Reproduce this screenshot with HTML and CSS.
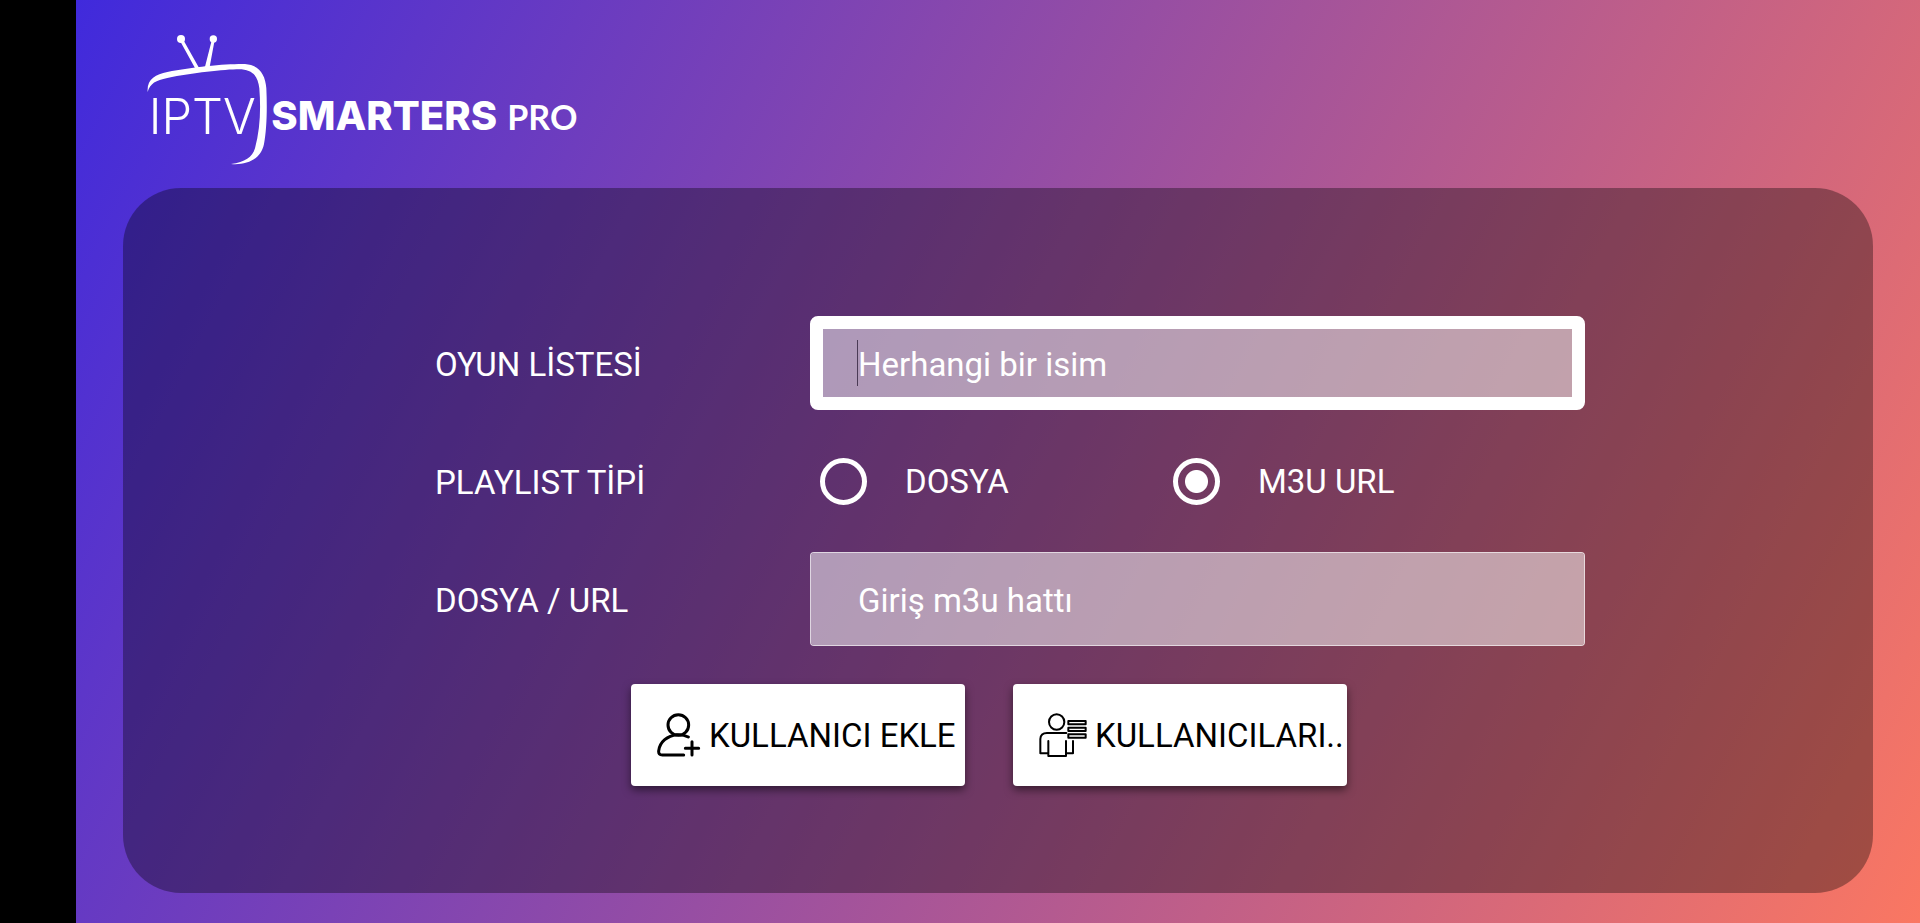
FILE: index.html
```html
<!DOCTYPE html>
<html lang="tr">
<head>
    <meta charset="UTF-8">
    <meta name="viewport" content="width=device-width, initial-scale=1.0">
    <title>IPTV Smarters Pro</title>
    <link rel="stylesheet" href="styles.css">
</head>
<body>
    <div class="screen">
        <header class="header">
            <svg class="logo" viewBox="0 0 1380 480" role="img" aria-label="IPTV Smarters Pro">
                <!-- antenna -->
                <circle cx="153" cy="57" r="12"/>
                <circle cx="250" cy="57" r="11"/>
                <path d="M149 61 L197 148 L238 146 L254 60 L246 58 L225 140 Q214 146 206 142 L158 56 Z"/>
                <!-- tv frame -->
                <path d="M53 216 C50 178 76 164 112 156 C190 140 290 131 345 132 C386 135 406 162 409 205 C412 270 410 330 402 372 C393 418 350 436 303 432 C345 427 367 412 375 385 C390 330 393 270 388 205 C384 172 372 152 335 148 C290 147 190 158 112 174 C78 181 60 190 53 216 Z"/>
                <text class="logo-iptv" x="56" y="342">IPTV</text>
                <text class="logo-smarters" x="424" y="329">SMARTERS</text>
                <text class="logo-pro" x="1132" y="330">PRO</text>
            </svg>
        </header>

        <main class="panel">
            <form class="playlist-form">
                <label class="form-label" for="playlistName">OYUN LİSTESİ</label>
                <div class="field active">
                    <input type="text" id="playlistName" placeholder="Herhangi bir isim">
                </div>

                <span class="form-label" id="typeLabel">PLAYLIST TİPİ</span>
                <div class="radio-group" role="radiogroup" aria-labelledby="typeLabel">
                    <label class="radio"><input type="radio" name="type" value="file">DOSYA</label>
                    <label class="radio"><input type="radio" name="type" value="url" checked>M3U URL</label>
                </div>

                <label class="form-label" for="playlistUrl">DOSYA / URL</label>
                <div class="field">
                    <input type="text" id="playlistUrl" placeholder="Giriş m3u hattı">
                </div>
            </form>

            <div class="actions">
                <button type="button" class="button">
                    <svg class="icon-add" viewBox="0 0 132 132" aria-hidden="true">
                        <circle cx="64" cy="36" r="31"/>
                        <path d="M94 72 Q80 64 60 65 C32 68 8 86 5 114 Q4 126 16 126 H80"/>
                        <path d="M105 86 V126 M85 106 H125"/>
                    </svg>
                    KULLANICI EKLE
                </button>
                <button type="button" class="button">
                    <svg class="icon-list" viewBox="0 0 144 132" aria-hidden="true">
                        <circle cx="53" cy="27" r="23"/>
                        <path d="M82 60 H24 Q5 60 4 78 V121 H26 M28 84 V129 H81 V84 M84 121 H102 V84"/>
                        <path d="M88 24 H140 V34 H88 Z M88 44 H140 V54 H88 Z M88 64 H140 V74 H88 Z"/>
                    </svg>
                    KULLANICILARI..
                </button>
            </div>
        </main>
    </div>
</body>
</html>
```
FILE: styles.css
```css
* {
    box-sizing: border-box;
}
body {
    margin: 0;
    padding-left: 76px;
    background-color: #000;
    color: white;
    font-family: Roboto, sans-serif;
    font-size: 33px;
}
.screen {
    display: flex;
    flex-direction: column;
    min-height: 100vh;
    padding: 20px 47px 30px;
    background: linear-gradient(117deg, #402adc, #fa7762);
}
.header {
    height: 168px;
    padding-left: 7px;
}
.logo {
    display: block;
    width: 460px;
    height: 160px;
    fill: white;
    font-family: Lato, sans-serif;
}
.logo-iptv {
    font-family: Inter, sans-serif;
    font-size: 146px;
    font-weight: 300;
}
.logo-smarters {
    font-family: Inter, sans-serif;
    font-size: 120px;
    font-weight: 800;
}
.logo-pro {
    font-size: 102px;
    font-weight: 700;
}
.panel {
    flex: 1;
    padding: 128px 0 106px;
    border-radius: 58px;
    background-color: rgba(0, 0, 0, 0.34);
}
.playlist-form {
    display: grid;
    grid-template-columns: 375px 1fr;
    grid-auto-rows: 94px;
    row-gap: 24px;
    align-items: center;
    padding: 0 288px 0 312px;
}
.form-label {
    padding-top: 2px;
}
.field {
    position: relative;
    height: 94px;
}
.field input {
    width: 100%;
    height: 100%;
    padding: 2px 47px 0;
    border: 1px solid rgba(255, 255, 255, 0.8);
    border-radius: 4px;
    background-color: rgba(255, 255, 255, 0.51);
    background-clip: padding-box;
    color: white;
    font: inherit;
    outline: none;
}
.field input::placeholder {
    color: white;
    opacity: 1;
}
.field.active input {
    padding: 2px 35px 0;
    border: 13px solid white;
    border-radius: 8px;
}
/* text cursor */
.field.active::before {
    content: "";
    position: absolute;
    top: 24px;
    left: 47px;
    width: 1px;
    height: 46px;
    background-color: #4a3a55;
}
.radio-group {
    display: grid;
    grid-template-columns: 353px 1fr;
    padding-left: 10px;
}
.radio {
    display: flex;
    align-items: center;
    gap: 38px;
}
.radio input {
    appearance: none;
    width: 47px;
    height: 47px;
    margin: 0;
    border: 5px solid white;
    border-radius: 50%;
}
.radio input:checked {
    background: radial-gradient(circle, white 11px, transparent 12px);
}
.actions {
    display: flex;
    justify-content: center;
    gap: 48px;
    margin-top: 38px;
    padding-right: 18px;
}
.button {
    display: flex;
    align-items: center;
    width: 334px;
    height: 102px;
    padding: 0 0 0 26px;
    border: none;
    border-radius: 4px;
    background-color: white;
    color: black;
    font: inherit;
    white-space: nowrap;
    box-shadow: 0 4px 8px rgba(0, 0, 0, 0.5);
}
.button svg {
    height: 44px;
    fill: none;
    stroke: black;
    stroke-linecap: round;
    stroke-linejoin: round;
}
.icon-add {
    width: 44px;
    margin-right: 8px;
    stroke-width: 9;
}
.icon-list {
    width: 48px;
    margin-right: 8px;
    stroke-width: 6;
}
```
